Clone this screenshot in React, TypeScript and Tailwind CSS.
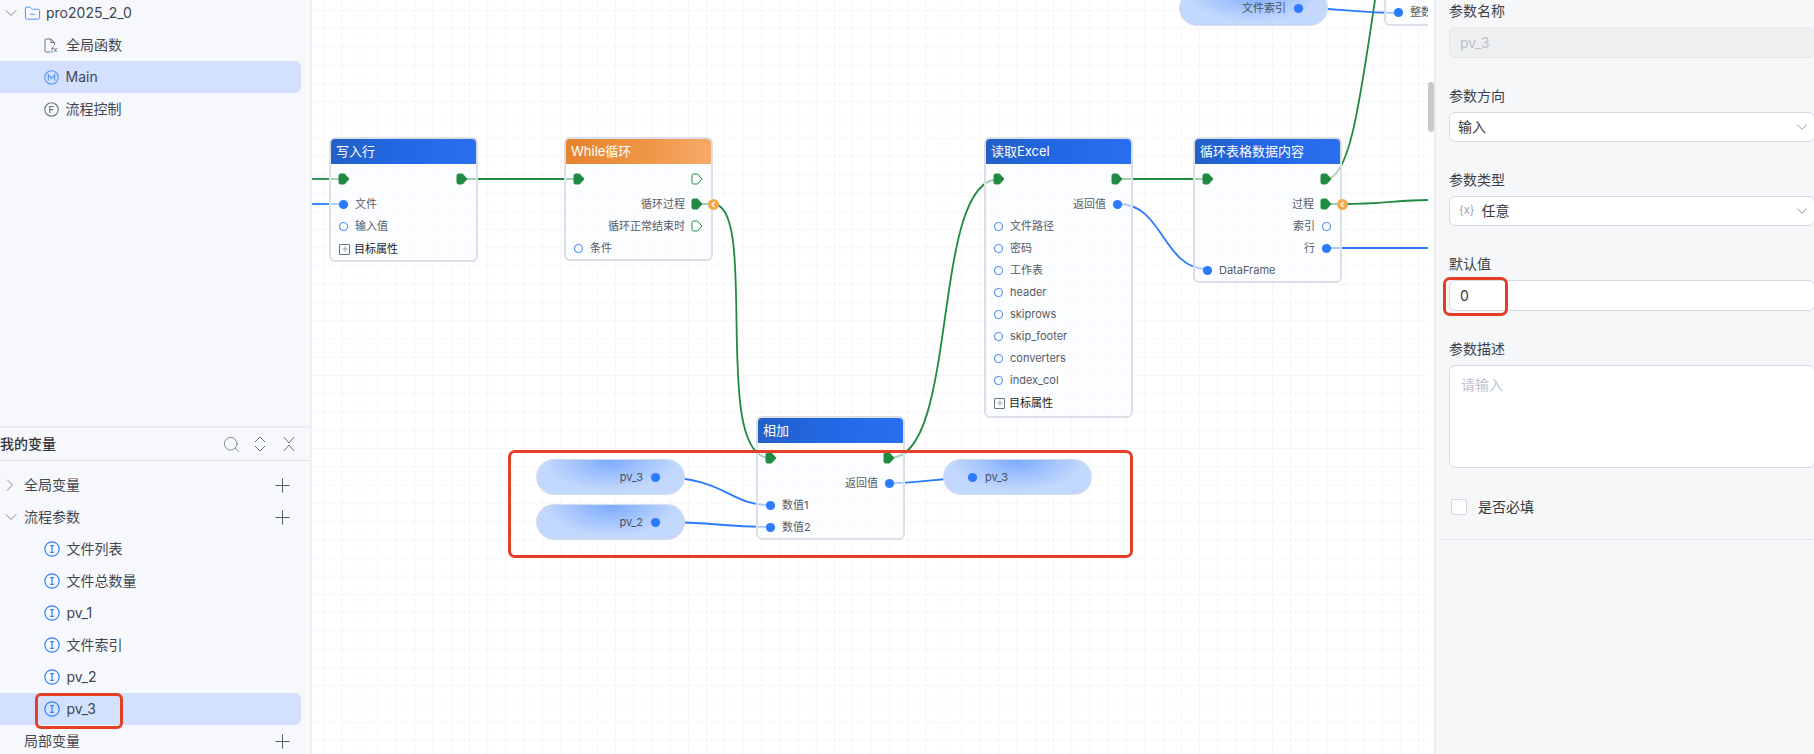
import React from "react";
import { ChevronDown, ChevronRight, FolderMinus, Plus, Search } from "lucide-react";

const FONT = "font-['Inter','Noto_Sans_CJK_SC',sans-serif]";

function CircleIcon({ kind }: { kind: "M" | "F" | "I" }) {
  const color = kind === "F" ? "#6b7280" : kind === "M" ? "#5b97f5" : "#2f80f0";
  const size = kind === "I" ? 16 : 15;
  return (
    <svg width={size} height={size} viewBox="0 0 15 15" fill="none" stroke={color} strokeWidth="1.1" className="shrink-0 -ml-[0.5px]">
      <circle cx="7.5" cy="7.5" r="6.7" />
      {kind === "M" && <path d="M4.3 10.5V4.8L7.5 8.6l3.2-3.8v5.7" />}
      {kind === "F" && <path d="M5.7 11V4.5h4M5.7 7.6h3.4" />}
      {kind === "I" && <path d="M5.8 4.3h3.4M7.5 4.3v6.4M5.8 10.7h3.4" />}
    </svg>
  );
}

function FxIcon() {
  return (
    <svg width="15" height="15" viewBox="0 0 15 15" fill="none" stroke="#6b7280" strokeWidth="1" className="shrink-0">
      <path d="M6.5 14H2.2Q1 14 1 12.8V2.2Q1 1 2.2 1H7l3.5 3.5V7M7 1v3.5h3.5" />
      <text x="7" y="14" fontSize="7" fill="#4b5563" stroke="none" fontStyle="italic">fx</text>
    </svg>
  );
}

function TreeRow({ icon, label, selected }: { icon: React.ReactNode; label: string; selected?: boolean }) {
  return (
    <div className={`h-8 w-[301px] flex items-center gap-[7px] pl-[44px] rounded-r-md text-sm text-[#414752] ${selected ? "bg-[#d3e1fe]" : ""}`}>
      {icon}
      <span>{label}</span>
    </div>
  );
}

function GroupRow({ label, chevron }: { label: string; chevron?: "open" | "closed" }) {
  return (
    <div className="h-8 flex items-center relative pl-6 pr-[7px] text-sm text-[#414752] w-[301px] justify-between">
      {chevron === "closed" && <ChevronRight size={20} strokeWidth={1} className="absolute left-[0px] text-[#6b7280]" />}
      {chevron === "open" && <ChevronDown size={20} strokeWidth={1} className="absolute left-[1px] text-[#6b7280]" />}
      <span>{label}</span>
      <Plus size={23} strokeWidth={1} className="text-[#4b5563]" />
    </div>
  );
}

function ExecPort({ hollow }: { hollow?: boolean }) {
  return (
    <svg width="12" height="12" viewBox="0 0 12 12" className="shrink-0">
      <path
        d="M2.5 1H6.5L11 6L6.5 11H2.5Q1 11 1 9.5V2.5Q1 1 2.5 1Z"
        fill={hollow ? "#ffffff" : "#1f8a42"}
        stroke="#1f8a42"
        strokeWidth={1}
        strokeLinejoin="round"
      />
    </svg>
  );
}

function DotPort({ hollow }: { hollow?: boolean }) {
  return (
    <svg width="11" height="11" viewBox="0 0 11 11" className="shrink-0">
      {hollow ? (
        <circle cx="5.5" cy="5.5" r="4" fill="#ffffff" stroke="#5b96f7" strokeWidth="1.2" />
      ) : (
        <circle cx="5.5" cy="5.5" r="4.6" fill="#2b7bfd" />
      )}
    </svg>
  );
}

function ExecRow({ rightHollow }: { rightHollow?: boolean }) {
  return (
    <div className="h-[22px] flex items-center justify-between pl-[7px] pr-[8px] mb-[3px]">
      <ExecPort />
      <ExecPort hollow={rightHollow} />
    </div>
  );
}

function InRow({ label, hollow }: { label: string; hollow?: boolean }) {
  return (
    <div className="h-[22px] flex items-center gap-[6px] pl-[7px] text-[11px] text-[#555b66] whitespace-nowrap">
      <DotPort hollow={hollow} />
      <span>{label}</span>
    </div>
  );
}

function OutRow({ label, hollow, exec, execHollow, badge }: { label: string; hollow?: boolean; exec?: boolean; execHollow?: boolean; badge?: boolean }) {
  return (
    <div className="h-[22px] flex items-center justify-end gap-[6px] pr-[8px] text-[11px] text-[#555b66] relative whitespace-nowrap">
      <span>{label}</span>
      {exec ? <ExecPort hollow={execHollow} /> : <DotPort hollow={hollow} />}
      {badge && (
        <span className="absolute right-[-8px] top-[5.5px] w-[11px] h-[11px] rounded-full bg-[#f2aa4c] flex items-center justify-center">
          <svg width="7" height="7" viewBox="0 0 7 7" fill="none" stroke="#ffffff" strokeWidth="1.2">
            <path d="M4.5 1L2 3.5L4.5 6" />
          </svg>
        </span>
      )}
    </div>
  );
}

function TargetRow() {
  return (
    <div className="h-[22px] mt-[1px] flex items-center gap-[4px] pl-[8px] text-[11px] text-[#222]">
      <span className="w-[11px] h-[11px] border border-[#6b7280] rounded-[1px] flex items-center justify-center">
        <Plus size={8} strokeWidth={1.4} className="text-[#4b5563]" />
      </span>
      <span>目标属性</span>
    </div>
  );
}

function Node({ cls, title, orange, children }: { cls: string; title: string; orange?: boolean; children: React.ReactNode }) {
  return (
    <div className={`absolute w-[149px] border-2 border-[#dcdfe8] rounded-[6px] overflow-visible bg-[#fafbff]/60 ${cls}`}>
      <div
        className={`h-[25px] flex items-center pl-[5px] text-[13px] text-white rounded-t-[4px] ${
          orange ? "bg-[linear-gradient(100deg,#e5822e,#ef9646_55%,#f5ab68)]" : "bg-[linear-gradient(100deg,#2360c4,#2268e6_50%,#2a6ff0)]"
        }`}
      >
        {title}
      </div>
      <div className="pt-[4px]">{children}</div>
    </div>
  );
}

function Pill({ cls, label, side }: { cls: string; label: string; side: "left" | "right" }) {
  return (
    <div
      className={`absolute w-[149px] h-[36px] rounded-[18px] border border-[#d5deef] bg-[radial-gradient(ellipse_at_50%_0%,#7cabff_0%,#a8c7fd_40%,#c3d8fd_65%)] flex items-center text-[11px] text-[#4b5260] gap-[7px] ${
        side === "left" ? "justify-end pr-[23px]" : "pl-[23px]"
      } ${cls}`}
    >
      {side === "right" && <DotPort />}
      <span>{label}</span>
      {side === "left" && <DotPort />}
    </div>
  );
}

function Wires() {
  const g = "#1f8a42";
  const b = "#2b7bfd";
  return (
    <svg className="absolute left-0 top-0" width="1116" height="754" viewBox="312 0 1116 754" fill="none" strokeWidth="1.8">
      <path stroke={g} d="M312 179H344" />
      <path stroke={b} d="M312 204H344" />
      <path stroke={g} d="M462 179H579" />
      <path stroke={g} d="M697 204H713C760 204 710 458 770 458" />
      <path stroke={g} d="M890 458C960 458 930 179 999 179" />
      <path stroke={g} d="M1117 179H1208" />
      <path stroke={b} d="M1119 204C1163 204 1163 269 1207 269" />
      <path stroke={g} d="M1326 179C1350 179 1360 100 1375 0" />
      <path stroke={g} d="M1326 204H1345C1380 204 1400 200 1428 200" />
      <path stroke={b} d="M1327 248H1428" />
      <path stroke={b} d="M655 477C727 477 727 505 770 505" />
      <path stroke={b} d="M655 522C720 522 720 527 770 527" />
      <path stroke={b} d="M891 483C915 483 925 480 972 477" />
      <path stroke={b} d="M1299 8C1350 8 1350 13 1399 13" />
    </svg>
  );
}

function Label({ text, cls = "" }: { text: string; cls?: string }) {
  return <div className={`h-5 flex items-center text-sm text-[#3a3f49] ${cls}`}>{text}</div>;
}

export default function App() {
  return (
    <div className={`w-[1814px] h-[754px] flex overflow-hidden bg-white ${FONT}`}>
      {/* Left panel */}
      <aside className="w-[312px] shrink-0 h-full bg-[#f7f8fb] border-r-2 border-[#eceef3] flex flex-col overflow-hidden">
        <div className="h-[429px] shrink-0 -mt-[3px]">
          <div className="h-8 flex items-center text-sm text-[#414752] relative pl-[24px] gap-[5px]">
            <ChevronDown size={20} strokeWidth={1} className="absolute left-[1px] text-[#6b7280]" />
            <FolderMinus size={17} strokeWidth={1.2} className="text-[#3b82f6]" />
            <span>pro2025_2_0</span>
          </div>
          <TreeRow icon={<FxIcon />} label="全局函数" />
          <TreeRow icon={<CircleIcon kind="M" />} label="Main" selected />
          <TreeRow icon={<CircleIcon kind="F" />} label="流程控制" />
        </div>
        <div className="h-[2px] shrink-0 bg-[#eaecf1]" />
        <div className="h-[33px] shrink-0 flex items-center justify-between border-b border-[#dfe2e9] pr-[13px]">
          <span className="text-sm font-medium text-[#2f343d]">我的变量</span>
          <div className="flex items-center gap-[13px] text-[#6b7280]">
            <span className="w-4 flex justify-center">
              <Search size={19} strokeWidth={1} className="shrink-0" />
            </span>
            <svg width="16" height="16" viewBox="0 0 16 16" fill="none" stroke="currentColor" strokeWidth="1">
              <path d="M3 6l5-5 5 5M3 10l5 5 5-5" />
            </svg>
            <svg width="16" height="16" viewBox="0 0 16 16" fill="none" stroke="currentColor" strokeWidth="1">
              <path d="M3 1l5 6 5-6M3 15l5-6 5 6" />
            </svg>
          </div>
        </div>
        <div className="pt-2 relative">
          <GroupRow label="全局变量" chevron="closed" />
          <GroupRow label="流程参数" chevron="open" />
          <TreeRow icon={<CircleIcon kind="I" />} label="文件列表" />
          <TreeRow icon={<CircleIcon kind="I" />} label="文件总数量" />
          <TreeRow icon={<CircleIcon kind="I" />} label="pv_1" />
          <TreeRow icon={<CircleIcon kind="I" />} label="文件索引" />
          <TreeRow icon={<CircleIcon kind="I" />} label="pv_2" />
          <TreeRow icon={<CircleIcon kind="I" />} label="pv_3" selected />
          <GroupRow label="局部变量" />
          <div className="absolute left-[35px] top-[232px] w-[88px] h-[36px] border-[3px] border-[#e53e26] rounded-[6px]" />
        </div>
      </aside>

      {/* Canvas */}
      <main className="relative w-[1116px] shrink-0 h-full overflow-hidden bg-white bg-[linear-gradient(#f5f6f8_1px,transparent_1px),linear-gradient(90deg,#f5f6f8_1px,transparent_1px)] bg-[size:18.25px_18.25px] bg-[position:11px_10px]">
        <Wires />

        <Node cls="left-[17px] top-[137px]" title="写入行">
          <ExecRow />
          <InRow label="文件" />
          <InRow label="输入值" hollow />
          <TargetRow />
        </Node>

        <Node cls="left-[252px] top-[137px]" title="While循环" orange>
          <ExecRow rightHollow />
          <OutRow label="循环过程" exec badge />
          <OutRow label="循环正常结束时" exec execHollow />
          <InRow label="条件" hollow />
        </Node>

        <Node cls="left-[672px] top-[137px] pb-[2px]" title="读取Excel">
          <ExecRow />
          <OutRow label="返回值" />
          <InRow label="文件路径" hollow />
          <InRow label="密码" hollow />
          <InRow label="工作表" hollow />
          <InRow label="header" hollow />
          <InRow label="skiprows" hollow />
          <InRow label="skip_footer" hollow />
          <InRow label="converters" hollow />
          <InRow label="index_col" hollow />
          <TargetRow />
        </Node>

        <Node cls="left-[881px] top-[137px]" title="循环表格数据内容">
          <ExecRow />
          <OutRow label="过程" exec badge />
          <OutRow label="索引" hollow />
          <OutRow label="行" />
          <InRow label="DataFrame" />
        </Node>

        <Node cls="left-[444px] top-[416px]" title="相加">
          <ExecRow />
          <OutRow label="返回值" />
          <InRow label="数值1" />
          <InRow label="数值2" />
        </Node>

        <Pill cls="left-[224px] top-[459px]" label="pv_3" side="left" />
        <Pill cls="left-[224px] top-[504px]" label="pv_2" side="left" />
        <Pill cls="left-[631px] top-[459px]" label="pv_3" side="right" />
        <Pill cls="left-[867px] top-[-10px]" label="文件索引" side="left" />

        <div className="absolute left-[1072px] top-[-100px] w-[149px] h-[126px] border-2 border-[#dcdfe8] rounded-[6px] bg-[#fafbff]/60 flex flex-col justify-end">
          <div className="mb-[1px]">
            <InRow label="整数" />
          </div>
        </div>

        <div className="absolute left-[196px] top-[450px] w-[625px] h-[108px] border-[3px] border-[#e53e26] rounded-[7px]" />
      </main>

      {/* Scrollbar gutter */}
      <div className="w-[6px] shrink-0 h-full bg-white">
        <div className="mt-[82px] h-[50px] bg-[#c9c9c9] rounded-[3px]" />
      </div>

      {/* Right panel */}
      <aside className="relative w-[380px] shrink-0 h-full bg-[#f6f7f9] border-l-2 border-[#e9ebf0] overflow-hidden">
        <div className="w-[366px] ml-[13px] pt-[1px]">
          <Label text="参数名称" />
          <div className="mt-[6px] h-[31px] rounded-md border border-[#e4e6ea] bg-[#eeeff1] flex items-center pl-[10px] text-sm text-[#bcc1ca]">pv_3</div>

          <Label text="参数方向" cls="mt-[28px]" />
          <div className="mt-[6px] h-[30px] rounded-md border border-[#d3d8e3] bg-white flex items-center justify-between pl-[8px] pr-[3px] text-sm text-[#333842]">
            <span>输入</span>
            <ChevronDown size={18} strokeWidth={1} className="text-[#6b7280]" />
          </div>

          <Label text="参数类型" cls="mt-[28px]" />
          <div className="mt-[6px] h-[30px] rounded-md border border-[#d3d8e3] bg-white flex items-center justify-between pl-[9px] pr-[3px] text-sm text-[#333842]">
            <span className="flex items-center gap-[7px]">
              <span className="text-[11px] text-[#9aa0ab]">{"{x}"}</span>
              <span>任意</span>
            </span>
            <ChevronDown size={18} strokeWidth={1} className="text-[#6b7280]" />
          </div>

          <Label text="默认值" cls="mt-[28px]" />
          <div className="mt-[6px] h-[31px] rounded-md border border-[#d3d8e3] bg-white flex items-center pl-[10px] text-sm text-[#333842]">0</div>

          <Label text="参数描述" cls="mt-[28px]" />
          <div className="mt-[6px] h-[103px] rounded-md border border-[#d3d8e3] bg-white pl-[11px] pt-[9px] text-sm text-[#c0c4d0]">请输入</div>

          <div className="mt-[31px] h-4 flex items-center gap-[11px] pl-[2px] text-sm text-[#333842]">
            <span className="w-4 h-4 rounded-[2px] border border-[#d3d8e3] bg-white" />
            <span>是否必填</span>
          </div>
        </div>
        <div className="mt-[24px] ml-[4px] h-px bg-[#e6e8ed]" />
        <div className="absolute left-[7px] top-[277px] w-[65px] h-[39px] border-[3px] border-[#e53e26] rounded-[7px]" />
      </aside>
    </div>
  );
}
